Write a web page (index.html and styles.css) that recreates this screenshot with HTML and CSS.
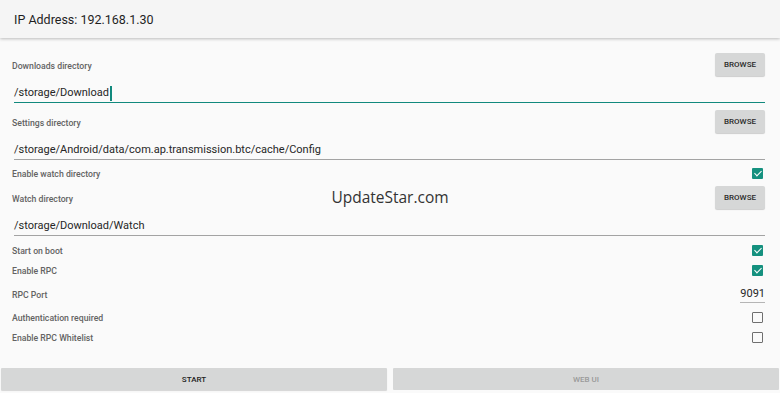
FILE: index.html
```html
<!DOCTYPE html>
<html>
<head>
    <meta charset="UTF-8">
    <title>Transmission</title>
    <link rel="stylesheet" href="styles.css">
</head>
<body>
    <!-- top bar -->
    <div class="app-bar">IP Address: 192.168.1.30</div>

    <div class="settings">
        <div class="row dir-row">
            <span class="label">Downloads directory</span>
            <button class="browse">BROWSE</button>
        </div>
        <div class="field focused"><span>/storage/Download</span><i class="cursor"></i></div>

        <div class="row dir-row gap">
            <span class="label">Settings directory</span>
            <button class="browse">BROWSE</button>
        </div>
        <div class="field"><span>/storage/Android/data/com.ap.transmission.btc/cache/Config</span></div>

        <div class="row watch-row">
            <span class="label">Enable watch directory</span>
            <span class="check on"></span>
        </div>

        <div class="row dir-row">
            <span class="label">Watch directory</span>
            <button class="browse">BROWSE</button>
        </div>
        <div class="field"><span>/storage/Download/Watch</span></div>

        <div class="row check-row first">
            <span class="label">Start on boot</span>
            <span class="check on"></span>
        </div>
        <div class="row check-row">
            <span class="label">Enable RPC</span>
            <span class="check on"></span>
        </div>
        <div class="row port-row">
            <span class="label">RPC Port</span>
            <span class="port">9091</span>
        </div>
        <div class="row check-row">
            <span class="label">Authentication required</span>
            <span class="check"></span>
        </div>
        <div class="row check-row">
            <span class="label">Enable RPC Whitelist</span>
            <span class="check"></span>
        </div>

        <div class="watermark">UpdateStar.com</div>
    </div>

    <!-- bottom buttons -->
    <div class="actions">
        <button class="action">START</button>
        <button class="action disabled">WEB UI</button>
    </div>
</body>
</html>
```

FILE: styles.css
```css
* { margin: 0; padding: 0; box-sizing: border-box; }

body {
    display: flex;
    flex-direction: column;
    height: 100vh;
    background: #fafafa;
    color: #212121;
    font-family: Roboto, "Liberation Sans", sans-serif;
    overflow: hidden;
}

/* header */
.app-bar {
    height: 38px;
    padding: 1px 14px 0;
    display: flex;
    align-items: center;
    font-size: 12.5px;
    color: #1f1f1f;
    background: #f5f5f5;
    box-shadow: 0 1px 3px rgba(0, 0, 0, 0.25);
    position: relative;
    z-index: 1;
}

/* settings list */
.settings {
    flex: 1;
    position: relative;
    padding: 15px 15px 0 12px;
}

.row {
    display: flex;
    align-items: center;
    justify-content: space-between;
}

.label {
    font-size: 8.7px;
    font-weight: 500;
    color: #636363;
    padding-top: 2px;
}

.dir-row { height: 23px; }
.dir-row.gap { margin-top: 7px; }

.browse {
    width: 50px;
    height: 23px;
    border: none;
    border-radius: 2px;
    background: #d6d7d7;
    box-shadow: 0 1px 1px rgba(0, 0, 0, 0.18);
    font-family: Roboto, "Liberation Sans", sans-serif;
    font-size: 8px;
    font-weight: 500;
    color: #2a2a2a;
}

.field {
    height: 27px;
    margin-left: 2px;
    display: flex;
    align-items: flex-end;
    border-bottom: 1px solid #a3a3a3;
    font-size: 11px;
    line-height: 16px;
    padding-bottom: 1px;
    color: #262626;
}

.field.focused { border-bottom: 1.5px solid #11897d; }

.cursor {
    display: inline-block;
    width: 1.5px;
    height: 15px;
    margin-left: 1px;
    background: #11897d;
}

.watch-row { height: 26px; }
.check-row { height: 20px; }
.check-row.first { margin-top: 4px; }
.check-row:last-of-type { height: 19px; }
.port-row { height: 27px; }

.check {
    width: 11px;
    height: 11px;
    margin-right: 2px;
    border: 1.5px solid #6f6f6f;
    border-radius: 1px;
    position: relative;
}

.check.on {
    border: none;
    background: #15917f;
}

.check.on::after {
    content: "";
    position: absolute;
    left: 3.5px;
    top: 1.5px;
    width: 3px;
    height: 6px;
    border-right: 1.5px solid #fff;
    border-bottom: 1.5px solid #fff;
    transform: rotate(45deg);
}

.port {
    font-size: 11px;
    line-height: 14px;
    margin-top: 2px;
    color: #262626;
    border-bottom: 1px solid #b5b5b5;
    padding-bottom: 1px;
}

.watermark {
    position: absolute;
    left: 0;
    right: 0;
    top: 148px;
    text-align: center;
    font-family: "Open Sans", sans-serif;
    font-size: 15.5px;
    color: #333;
}

/* bottom buttons */
.actions {
    display: flex;
    gap: 6px;
    padding: 0 1px 3px;
}

.action {
    flex: 1;
    height: 22px;
    border: none;
    border-radius: 1px;
    background: #d6d7d7;
    box-shadow: 0 1px 1px rgba(0, 0, 0, 0.15);
    font-family: Roboto, "Liberation Sans", sans-serif;
    font-size: 8px;
    font-weight: 500;
    color: #222;
}

.action.disabled {
    color: #9a9a9a;
    box-shadow: none;
}
```
